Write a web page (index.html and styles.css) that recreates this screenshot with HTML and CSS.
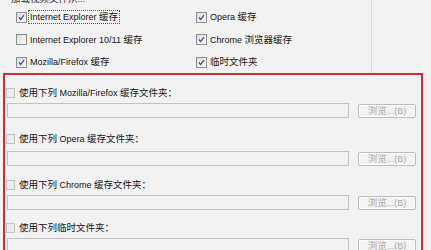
FILE: index.html
```html
<!DOCTYPE html>
<html>
<head>
<meta charset="utf-8">
<link rel="stylesheet" href="styles.css">
</head>
<body>
<div class="page">
  <div class="group">
    <div class="legend"><span class="cn">加载视频文件从</span>...</div>
    <div class="opts">
      <div class="opt"><span class="cb on"><svg viewBox="0 0 11 11"><path d="M2.5 5.5 L4.5 8 L8.5 2.5" fill="none" stroke="#3d4f86" stroke-width="1.6"/></svg></span><span class="txt focus">Internet Explorer <span class="cn">缓存</span></span></div>
      <div class="opt"><span class="cb on"><svg viewBox="0 0 11 11"><path d="M2.5 5.5 L4.5 8 L8.5 2.5" fill="none" stroke="#3d4f86" stroke-width="1.6"/></svg></span><span class="txt">Opera <span class="cn">缓存</span></span></div>
      <div class="opt"><span class="cb"></span><span class="txt">Internet Explorer 10/11 <span class="cn">缓存</span></span></div>
      <div class="opt"><span class="cb on"><svg viewBox="0 0 11 11"><path d="M2.5 5.5 L4.5 8 L8.5 2.5" fill="none" stroke="#3d4f86" stroke-width="1.6"/></svg></span><span class="txt">Chrome <span class="cn">浏览器缓存</span></span></div>
      <div class="opt"><span class="cb on"><svg viewBox="0 0 11 11"><path d="M2.5 5.5 L4.5 8 L8.5 2.5" fill="none" stroke="#3d4f86" stroke-width="1.6"/></svg></span><span class="txt">Mozilla/Firefox <span class="cn">缓存</span></span></div>
      <div class="opt"><span class="cb on"><svg viewBox="0 0 11 11"><path d="M2.5 5.5 L4.5 8 L8.5 2.5" fill="none" stroke="#3d4f86" stroke-width="1.6"/></svg></span><span class="txt"><span class="cn">临时文件夹</span></span></div>
    </div>
  </div>
  <div class="hl">
    <div class="sec s1">
      <div class="sec-label"><span class="cb dis"></span><span><span class="cn">使用下列</span> Mozilla/Firefox <span class="cn">缓存文件夹：</span></span></div>
      <div class="sec-row"><div class="path"></div><div class="btn"><span class="cn">浏览</span>...(B)</div></div>
    </div>
    <div class="sec s2">
      <div class="sec-label"><span class="cb dis"></span><span><span class="cn">使用下列</span> Opera <span class="cn">缓存文件夹：</span></span></div>
      <div class="sec-row"><div class="path"></div><div class="btn"><span class="cn">浏览</span>...(B)</div></div>
    </div>
    <div class="sec s3">
      <div class="sec-label"><span class="cb dis"></span><span><span class="cn">使用下列</span> Chrome <span class="cn">缓存文件夹：</span></span></div>
      <div class="sec-row"><div class="path"></div><div class="btn"><span class="cn">浏览</span>...(B)</div></div>
    </div>
    <div class="sec s4">
      <div class="sec-label"><span class="cb dis"></span><span><span class="cn">使用下列临时文件夹：</span></span></div>
      <div class="sec-row"><div class="path"></div><div class="btn"><span class="cn">浏览</span>...(B)</div></div>
    </div>
  </div>
</div>
</body>
</html>
```
FILE: styles.css
```css
html, body {
  margin: 0;
  padding: 0;
  background: #f2f2f2;
}
body {
  width: 431px;
  height: 250px;
  overflow: hidden;
  font-family: "Liberation Sans", "Noto Sans CJK SC", sans-serif;
  font-size: 9px;
  color: #141414;
}
.cn {
  font-family: "Noto Sans CJK SC", sans-serif;
  font-size: 9.5px;
  line-height: 1;
}
.page {
  width: 431px;
  height: 250px;
  overflow: hidden;
}
.group {
  margin-top: -7px;
  height: 80px;
  width: 372px;
  border-right: 1px solid #d8d8d8;
  box-sizing: border-box;
}
.legend {
  padding-left: 11px;
  line-height: 12px;
  height: 12px;
  color: #333;
}
.opts {
  padding-top: 1px;
  padding-left: 16px;
  display: grid;
  grid-template-columns: 180px auto;
  grid-auto-rows: 22.5px;
}
.opt {
  display: flex;
  align-items: center;
  gap: 1px;
}
.cb {
  width: 11px;
  height: 11px;
  box-sizing: border-box;
  border: 1px solid #8d8f92;
  background: linear-gradient(135deg, #dcdcdc, #f8f8f8);
  display: inline-flex;
  flex: none;
}
.cb svg {
  width: 9px;
  height: 9px;
}
.txt {
  padding: 0 1px;
  line-height: 12px;
  height: 12px;
  border: 1px dotted transparent;
}
.txt.focus {
  border-color: #555;
}
.hl {
  margin-left: 3px;
  width: 420px;
  height: 220px;
  box-sizing: border-box;
  border: 2px solid #d12a3b;
  padding-top: 11px;
  padding-left: 1px;
}
.sec {
  margin-bottom: 13px;
}
.s1 {
  margin-bottom: 14px;
}
.s2 .sec-row {
  margin-top: 5px;
}
.s2 {
  margin-bottom: 12px;
}
.s3 {
  margin-bottom: 11px;
}
.sec-label {
  display: flex;
  align-items: center;
  height: 14px;
  line-height: 14px;
  gap: 4px;
}
.cb.dis {
  width: 9px;
  height: 10px;
  border-color: #c4c4c4;
  background: #ececec;
}
.sec-row {
  margin-top: 3px;
  display: flex;
  align-items: center;
  height: 15px;
}
.path {
  margin-left: 1px;
  width: 342px;
  height: 15px;
  box-sizing: border-box;
  border: 1px solid #c2c2c2;
  background: #f2f2f2;
}
.btn {
  margin-left: 9px;
  width: 58px;
  height: 14px;
  box-sizing: border-box;
  border: 1px solid #bcbcbc;
  border-radius: 2px;
  background: #f4f4f4;
  box-shadow: inset 0 0 0 1px #fbfbfb;
  color: #a8a8a8;
  font-size: 9px;
  line-height: 12px;
  text-align: center;
}
```
